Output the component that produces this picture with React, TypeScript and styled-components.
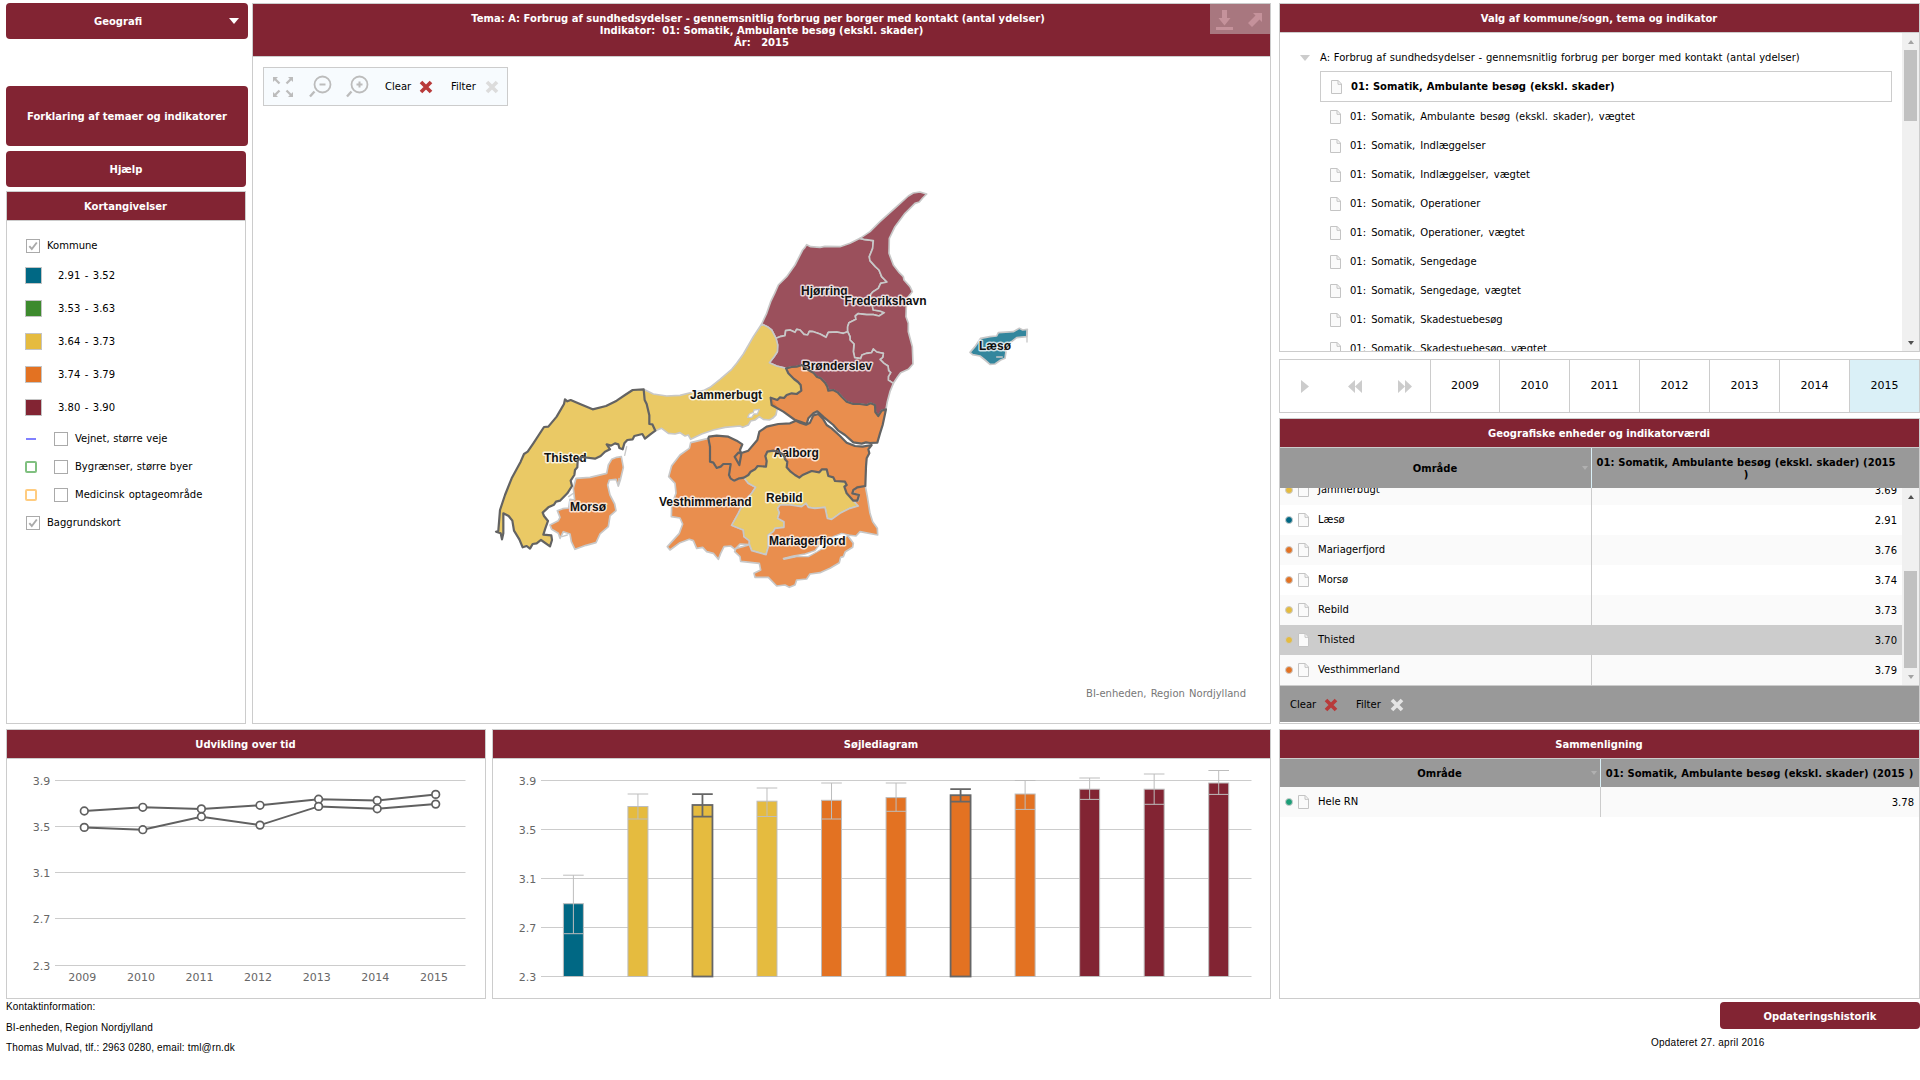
import React from 'react';
import styled, { createGlobalStyle } from 'styled-components';

const C = {
  brand: '#822433',
  line: '#cccccc',
  teal: '#006884',
  green: '#3d8a2e',
  yellow: '#e5bb3f',
  orange: '#e37222',
  dark: '#666666',
};

const Global = createGlobalStyle`
  * { box-sizing: border-box; }
  html, body { margin: 0; padding: 0; background: #fff; overflow: hidden; }
  body { font-family: "DejaVu Sans", Verdana, sans-serif; font-size: 10px; line-height: 12px; color: #000; }
  svg { display: block; flex: none; }
  svg text { font-family: "DejaVu Sans", Verdana, sans-serif; }
`;

const Page = styled.div`
  width: 1920px;
  height: 1080px;
  padding: 3px 0 0 6px;
  display: flex;
  flex-direction: column;
  overflow: hidden;
`;
const TopRow = styled.div`
  display: flex;
  height: 721px;
`;
const BottomRow = styled.div`
  display: flex;
  height: 270px;
  margin-top: 5px;
`;
const Column = styled.div<{ $w: number; $ml?: number }>`
  width: ${(p) => p.$w}px;
  margin-left: ${(p) => p.$ml ?? 0}px;
  display: flex;
  flex-direction: column;
  flex: none;
`;
const Panel = styled.section<{ $w: number; $h: number; $ml?: number; $mt?: number }>`
  width: ${(p) => p.$w}px;
  height: ${(p) => p.$h}px;
  margin-left: ${(p) => p.$ml ?? 0}px;
  margin-top: ${(p) => p.$mt ?? 0}px;
  border: 1px solid ${C.line};
  background: #fff;
  display: flex;
  flex-direction: column;
  flex: none;
  overflow: hidden;
  position: relative;
`;
const PanelTitle = styled.h2`
  margin: 0;
  padding: 2px 1px 0 0;
  height: 29px;
  flex: none;
  border-bottom: 1px solid ${C.line};
  background: ${C.brand};
  color: #fff;
  font-size: 10px;
  font-weight: bold;
  display: flex;
  align-items: center;
  justify-content: center;
`;
const Button = styled.button<{ $w: number; $h: number; $mt?: number }>`
  width: ${(p) => p.$w}px;
  height: ${(p) => p.$h}px;
  margin: ${(p) => p.$mt ?? 0}px 0 0;
  padding: 2px 0 0;
  border: 0;
  border-radius: 4px;
  background: ${C.brand};
  color: #fff;
  font: bold 10px/12px "DejaVu Sans", Verdana, sans-serif;
  display: flex;
  align-items: center;
  justify-content: center;
  flex: none;
`;
const GeoLabel = styled.span`
  flex: 1;
  margin-right: -1px;
  text-align: center;
`;
const Caret = styled.span`
  border: 5.5px solid transparent;
  border-top: 6px solid #fff;
  border-bottom: 0;
  margin: 0 9px 2px 0;
`;

const Legend = styled.div`
  padding: 11px 0 0 18px;
`;
const LegendRow = styled.div<{ $h: number; $ws?: number }>`
  height: ${(p) => p.$h}px;
  word-spacing: ${(p) => p.$ws ?? 0}px;
  display: flex;
  align-items: center;
`;
const LayerList = styled.div`
  padding-top: 1px;
`;
const Swatch = styled.i<{ $c: string }>`
  width: 17px;
  height: 17px;
  border: 1px solid #c4c4c4;
  background: ${(p) => p.$c};
  margin-right: 16px;
`;
const LayerKey = styled.span`
  width: 28px;
  display: flex;
`;
const LineKey = styled.i`
  width: 10px;
  height: 2px;
  margin-left: 1px;
  background: #8080ff;
`;
const AreaKey = styled.i<{ $c: string }>`
  width: 12px;
  height: 12px;
  border: 2px solid ${(p) => p.$c};
  border-radius: 2px;
`;
const Box = styled.span`
  width: 14px;
  height: 14px;
  border: 1px solid #aaa;
  background: #fff;
  margin: 0 7px 0 1px;
  display: flex;
  align-items: center;
  justify-content: center;
`;

const MapHeader = styled.header`
  height: 53px;
  flex: none;
  background: ${C.brand};
  border-bottom: 1px solid ${C.line};
  color: #fff;
  font-weight: bold;
  text-align: center;
  white-space: pre;
  padding-top: 9px;
`;
const MapTitle = styled.div<{ $shift?: number }>`
  padding-right: ${(p) => p.$shift ?? 0}px;
`;
const MapActions = styled.div`
  position: absolute;
  top: 0;
  right: 0;
  width: 60px;
  height: 30px;
  background: #a8777f;
`;
const MapBody = styled.div`
  flex: 1;
  position: relative;
`;
const Toolbar = styled.div`
  position: absolute;
  left: 10px;
  top: 10px;
  width: 245px;
  height: 39px;
  border: 1px solid ${C.line};
  background: #f7fbfe;
  display: flex;
  align-items: center;
  padding-left: 8px;
`;
const ToolLabel = styled.span<{ $w: number; $ml: number }>`
  width: ${(p) => p.$w}px;
  margin-left: ${(p) => p.$ml}px;
  white-space: nowrap;
`;
const Credit = styled.div`
  position: absolute;
  right: 24px;
  bottom: 23px;
  color: #777;
  word-spacing: 1px;
`;

const TreeBody = styled.div`
  flex: 1;
  display: flex;
  min-height: 0;
`;
const Tree = styled.div`
  flex: 1;
  overflow: hidden;
  padding: 11px 10px 0 20px;
`;
const TreeRoot = styled.div`
  height: 27px;
  display: flex;
  align-items: center;
  white-space: nowrap;
  word-spacing: 0.6px;
`;
const Toggle = styled.span`
  border: 5.5px solid transparent;
  border-top: 6px solid #ccc;
  border-bottom: 0;
  margin-right: 10px;
`;
const TreeItem = styled.div<{ $active?: boolean }>`
  height: ${(p) => (p.$active ? 31 : 29)}px;
  margin-left: 20px;
  padding-left: 10px;
  border: ${(p) => (p.$active ? `1px solid ${C.line}` : '0')};
  font-weight: ${(p) => (p.$active ? 'bold' : 'normal')};
  word-spacing: ${(p) => (p.$active ? 0.5 : 1.9)}px;
  display: flex;
  align-items: center;
  gap: 9px;
  white-space: nowrap;
`;
const ScrollTrack = styled.div`
  width: 17px;
  flex: none;
  background: #f0f0f0;
  display: flex;
  flex-direction: column;
  align-items: center;
`;
const ScrollArrow = styled.i<{ $up?: boolean; $c: string }>`
  border: 3.5px solid transparent;
  border-top: ${(p) => (p.$up ? '0' : `4px solid ${p.$c}`)};
  border-bottom: ${(p) => (p.$up ? `4px solid ${p.$c}` : '0')};
  margin: 7px 0 6px;
`;
const Thumb = styled.i<{ $top: number; $h: number }>`
  width: 13px;
  height: ${(p) => p.$h}px;
  margin-top: ${(p) => p.$top}px;
  margin-bottom: auto;
  background: #c1c1c1;
`;

const Timeline = styled.div`
  height: 54px;
  margin-top: 7px;
  border: 1px solid ${C.line};
  display: grid;
  grid-template-columns: 150px 69px repeat(4, 70px) 70px 70px;
`;
const Controls = styled.div`
  display: flex;
  align-items: center;
  overflow: hidden;
`;
const Year = styled.div<{ $active?: boolean }>`
  border-left: 1px solid ${C.line};
  background: ${(p) => (p.$active ? '#daf0f7' : '#fff')};
  font-size: 11px;
  display: flex;
  align-items: center;
  justify-content: center;
`;

const TableHead = styled.div<{ $h: number; $first: number }>`
  height: ${(p) => p.$h}px;
  flex: none;
  background: #999;
  display: grid;
  grid-template-columns: ${(p) => p.$first}px 1fr;
  font-weight: bold;
  text-align: center;
`;
const HeadCell = styled.div<{ $value?: boolean; $pr?: number }>`
  display: flex;
  align-items: center;
  justify-content: center;
  border-left: ${(p) => (p.$value ? '1px solid #daf0f7' : '0')};
  padding: 2px ${(p) => p.$pr ?? 1}px 0 0;
  white-space: nowrap;
  word-spacing: 0.35px;
  position: relative;
`;
const SortMark = styled.i`
  position: absolute;
  right: 3px;
  top: 50%;
  margin-top: -2px;
  border: 3.5px solid transparent;
  border-top: 4px solid #b0b0b0;
  border-bottom: 0;
`;
const TableBody = styled.div`
  display: flex;
  height: 197px;
  flex: none;
  overflow: hidden;
`;
const Rows = styled.div<{ $offset: number }>`
  flex: 1;
  margin-top: ${(p) => p.$offset}px;
`;
const Row = styled.div<{ $first: number; $bg: string }>`
  height: 30px;
  display: grid;
  grid-template-columns: ${(p) => p.$first}px 1fr;
  background: ${(p) => p.$bg};
`;
const NameCell = styled.div`
  display: flex;
  align-items: center;
  padding-left: 5px;
`;
const Dot = styled.i<{ $c: string }>`
  width: 8px;
  height: 8px;
  border-radius: 50%;
  border: 1px solid #ccc;
  background: ${(p) => p.$c};
  margin-right: 5px;
`;
const NameText = styled.span`
  margin-left: 9px;
`;
const ValueCell = styled.div`
  border-left: 1px solid ${C.line};
  display: flex;
  align-items: center;
  justify-content: flex-end;
  padding: 1px 5px 0 0;
`;
const TableFoot = styled.div`
  height: 37px;
  flex: none;
  border-top: 1px solid ${C.line};
  background: #999;
  display: flex;
  align-items: center;
  padding: 1px 0 0 10px;
`;

const Footer = styled.footer`
  display: flex;
  justify-content: space-between;
  font-family: "Liberation Sans", Arial, sans-serif;
`;
const Contact = styled.div`
  padding-top: 2px;
  line-height: 12px;
  letter-spacing: 0.17px;
`;
const ContactLine = styled.p`
  margin: 0 0 8.5px;
`;
const Updates = styled.div`
  width: 269px;
  padding-top: 3px;
  display: flex;
  flex-direction: column;
  align-items: flex-end;
`;
const Updated = styled.div`
  align-self: flex-start;
  margin-top: 8px;
  letter-spacing: 0.24px;
`;

const DocIcon = () => (
  <svg width="11" height="14" viewBox="0 0 11 14">
    <path d="M.5.5H7.2L10.5 4V13.5H.5Z" fill="#fafafa" stroke="#c4c4c4" />
    <path d="M7 .5V4.3H10.5" fill="none" stroke="#c4c4c4" />
  </svg>
);
const Cross = ({ c }: { c: string }) => (
  <svg width="14" height="14" viewBox="0 0 14 14">
    <path d="M2 2L12 12M12 2L2 12" stroke={c} strokeWidth="3.7" />
  </svg>
);
const Check = () => (
  <svg width="10" height="10" viewBox="0 0 10 10">
    <path d="M1.3 5.2L3.8 8L8.8 1.5" fill="none" stroke="#aaa" strokeWidth="1.9" />
  </svg>
);
const ExpandIcon = () => (
  <svg width="22" height="22" viewBox="0 0 22 22">
    <g fill="#bcbcbc" stroke="#bcbcbc">
      {[0, 90, 180, 270].map((a) => (
        <g key={a} transform={`rotate(${a} 11 11)`}>
          <path d="M1 1H6L1 6Z" strokeWidth="0" />
          <path d="M2.5 2.5L7.500 7.500" strokeWidth="2.3" />
        </g>
      ))}
    </g>
  </svg>
);
const ZoomIcon = ({ plus }: { plus?: boolean }) => (
  <svg width="23" height="23" viewBox="0 0 23 23">
    <g fill="none" stroke="#bcbcbc" strokeWidth="1.8">
      <circle cx="13.5" cy="9.5" r="8" />
      <path d="M5.5 16.5L1 21.5" strokeWidth="2.4" />
      <path d={plus ? 'M10.5 9.5H16.5M13.5 6.5V12.5' : 'M10.5 9.5H16.5'} strokeWidth="2" />
    </g>
  </svg>
);

const border = {
  thistedJammer: '526,752 517,733 508,732 508,706 500,672 494,660 491,628',
  jammerAalborg: '918,565 925,580 942,597 954,606 962,615 964,632 950,642 935,640 920,645 912,654 900,652 892,660 872,653',
  hjorFred: '1140,175 1152,178 1180,182 1178,205 1168,230 1170,242 1186,260 1197,270 1205,290 1221,306 1202,310 1195,325 1178,336 1171,345 1170,360 1176,374 1180,390 1200,393 1213,398 1197,408 1180,404 1160,404 1134,401 1126,408 1128,418 1107,428 1103,440 1103,455',
  hjorBron: '1103,455 1090,460 1070,456 1045,457 1038,472 1020,462 1000,455 988,454 983,465 972,463 960,450 950,448 945,457 930,450 917,452 915,467 900,470 888,475',
  bronFred: '1103,455 1110,470 1110,480 1122,492 1120,515 1124,533 1142,536 1146,525 1160,520 1175,518 1180,507 1190,516 1210,520 1208,532 1200,538 1212,550 1224,558 1226,572 1232,578 1225,590 1225,600 1240,610',
  bronAalborg: '1218,688 1205,692 1195,708 1186,696 1185,675 1172,670 1160,675 1140,672 1120,672 1100,665 1085,650 1074,638 1060,630 1045,632 1042,620 1035,608 1022,595 1010,590 1000,578 985,570 966,555 950,560 935,561 918,565',
  rebildAalborg: '792,893 805,885 812,875 825,868 833,858 858,860 860,843 856,828 862,815 880,812 895,816 912,824 915,838 922,845 920,862 932,875 945,885 958,893 968,885 995,873 1018,877 1026,868 1040,868 1045,888 1060,892 1065,903 1095,905 1100,915 1093,920 1100,940 1120,962',
  vestAalborg: '685,775 690,800 690,845 700,848 710,864 722,860 730,852 752,852 750,865 747,885 752,896 762,902 775,896 792,893',
  rebildVest: '792,893 805,910 827,922 815,940 790,970 775,1000 755,1036 790,1050 792,1070 808,1082 808,1094',
  rebildMaria: '808,1094 815,1112 858,1124 865,1100 865,1065 880,1055 885,1045 912,1042 912,1025 893,1015 898,998 893,985 900,975 930,975 965,980 978,970 985,982 1005,985 1035,982 1042,1015 1055,1018 1080,1000 1110,985 1135,978 1120,962',
};
const rev = (s: string) => s.split(' ').reverse().join(' ');

const regions = [
  { c: C.brand, p: `845,432 860,400 872,365 884,340 895,315 920,290 945,255 968,210 975,202 980,194 992,200 1020,202 1035,199 1080,200 1110,190 ${border.hjorFred} ${border.hjorBron} 875,450 862,440` },
  { c: C.brand, p: `1140,175 1170,155 1200,125 1250,80 1285,48 1300,39 1320,36 1340,42 1328,54 1318,66 1305,70 1275,100 1245,140 1228,175 1227,220 1240,255 1258,278 1270,290 1272,300 1290,320 1297,335 1285,350 1279,380 1278,410 1285,430 1285,455 1297,500 1299,552 1285,568 1262,578 1252,592 1240,610 ${rev(border.bronFred)} ${rev(border.hjorFred)}` },
  { c: C.brand, p: `${rev(border.hjorBron)} ${border.bronFred} 1230,635 1222,665 ${border.bronAalborg} 890,558 868,548 882,530 892,515 893,495 888,475` },
  { c: C.yellow, p: `491,628 520,642 560,648 600,646 640,636 670,632 690,622 720,598 755,568 770,550 790,522 820,470 845,432 862,440 875,450 888,475 893,495 892,515 882,530 868,548 890,558 ${border.jammerAalborg} 892,685 888,705 880,713 868,720 850,718 838,710 825,720 812,723 805,735 788,742 780,738 735,742 700,750 665,762 632,778 625,765 615,768 600,758 585,762 565,760 545,745 526,752 ${border.thistedJammer}` },
  { c: C.orange, p: `685,775 632,788 628,805 600,825 575,857 566,890 585,910 588,940 575,975 574,1010 600,1014 608,1032 598,1060 562,1100 570,1110 600,1088 628,1078 640,1082 650,1105 668,1102 680,1115 700,1120 715,1138 722,1120 732,1100 752,1098 765,1108 780,1092 808,1094 ${rev(border.rebildVest)} ${rev(border.vestAalborg)}` },
  { c: C.yellow, p: `${border.rebildVest} ${border.rebildMaria} ${rev(border.rebildAalborg)}` },
  { c: C.orange, p: `${border.rebildMaria} 1135,962 1137,945 1117,938 1130,920 1156,918 1162,950 1170,1000 1178,1025 1192,1045 1193,1065 1140,1055 1128,1068 1102,1065 1120,1090 1118,1102 1096,1115 1090,1130 1082,1132 1078,1148 1050,1165 1020,1178 990,1182 980,1197 950,1200 945,1215 928,1222 915,1215 890,1218 865,1192 825,1192 822,1180 842,1170 838,1150 782,1144 780,1130 764,1115 768,1105 788,1100` },
  { c: C.orange, p: '395,838 410,832 424,830 430,862 421,900 415,918 408,898 388,900 383,915 390,945 404,972 408,992 390,1008 385,1040 360,1062 348,1088 318,1096 285,1108 274,1085 270,1062 250,1055 240,1075 235,1060 215,1048 210,1035 235,1022 240,1012 232,992 248,986 266,984 270,958 284,960 280,925 288,895 330,892 380,880 385,855' },
  { c: C.teal, p: '1470,517 1485,500 1502,475 1530,470 1550,468 1555,458 1600,455 1618,445 1628,450 1642,448 1640,470 1610,473 1588,490 1578,515 1575,535 1562,540 1545,552 1530,553 1515,540 1500,528 1478,524' },
];
const selected = [
  { c: C.yellow, p: `491,628 458,630 435,645 410,662 378,678 338,688 300,672 272,660 262,664 255,658 252,672 230,710 205,740 192,741 160,790 143,815 132,822 122,845 95,895 75,945 60,990 55,1052 48,1055 62,1060 66,1078 70,1060 70,1000 86,1008 97,1022 102,1052 118,1078 128,1102 140,1098 150,1106 158,1092 170,1090 183,1080 210,1099 216,1080 214,1066 190,1064 196,1045 204,1023 192,1008 188,998 205,982 222,974 228,965 240,962 262,940 276,918 272,902 283,885 285,870 292,862 293,842 305,831 345,836 362,828 375,815 390,808 380,793 393,797 405,790 415,793 418,804 428,808 433,790 442,780 458,778 463,768 487,762 495,776 510,764 526,752 ${border.thistedJammer}` },
  { c: C.orange, p: `${border.jammerAalborg} 875,675 910,695 945,720 960,725 980,732 985,715 1000,700 1012,694 1032,712 1060,735 1075,752 1095,765 1120,787 1145,791 1158,787 1170,789 1192,788 1200,760 1208,735 1218,688 ${border.bronAalborg}` },
  { c: C.orange, p: `${border.rebildAalborg} 1132,962 1137,945 1117,940 1120,930 1132,922 1156,918 1158,860 1160,835 1168,820 1165,808 1175,795 1148,800 1125,798 1100,788 1080,768 1055,745 1040,735 1030,718 1015,702 1000,706 990,728 978,734 960,728 948,722 930,730 895,732 860,740 838,755 832,780 805,812 782,820 775,818 764,830 778,855 784,822 780,810 787,793 770,782 745,770 710,767 687,770 ${border.vestAalborg}` },
];
const labels: [string, number, number][] = [
  ['Hjørring', 801, 294.5],
  ['Frederikshavn', 844.5, 304.5],
  ['Brønderslev', 802, 369.5],
  ['Læsø', 979, 349.5],
  ['Jammerbugt', 690, 398.5],
  ['Thisted', 544, 462],
  ['Morsø', 570, 510.5],
  ['Vesthimmerland', 659, 505.5],
  ['Aalborg', 773.5, 456.5],
  ['Rebild', 766, 501.5],
  ['Mariagerfjord', 769, 544.5],
];

const geo = 'translate(480 180) scale(.33333)';
const RegionMap = () => (
  <svg width="1017" height="666" viewBox="253 57 1017 666">
    <g transform={geo} strokeLinejoin="round" strokeLinecap="round">
      {regions.map((r, i) => (
        <polygon key={i} points={r.p} fill={r.c} fillOpacity=".8" stroke="#c8c8c8" strokeWidth="5" />
      ))}
      <g fill="#fff" stroke="#c8c8c8" strokeWidth="4">
        <polygon points="803,712 808,702 820,697 822,690 838,688 832,702 822,702 815,712" />
        <polygon points="910,1135 940,1128 975,1122 1005,1112 1020,1092 1060,1070 1085,1060 1105,1065 1080,1082 1040,1098 1010,1116 985,1130 950,1130 912,1138" />
        <path d="M440,800L434,826M415,918L417,895M1641,452L1641,486M1550,531H1567M266,950L280,940M246,1070L262,1065" fill="none" />
      </g>
      {selected.map((r, i) => (
        <polygon key={i} points={r.p} fill={r.c} fillOpacity=".8" />
      ))}
    </g>
    <g fontWeight="bold" fontSize="12" fill="#111" stroke="#fff" strokeOpacity=".75" strokeWidth="3" strokeLinejoin="round" paintOrder="stroke">
      {labels.map(([t, x, y]) => (
        <text key={t} x={x} y={y} style={{ fontFamily: '"Liberation Sans", Arial, sans-serif' }}>{t}</text>
      ))}
    </g>
    <g transform={geo} strokeLinejoin="round" fill="none" stroke="#636363" strokeWidth="6.6">
      {selected.map((r, i) => <polygon key={i} points={r.p} />)}
    </g>
  </svg>
);

const years = ['2009', '2010', '2011', '2012', '2013', '2014', '2015'];
const ticks = ['3.9', '3.5', '3.1', '2.7', '2.3'];
const seriesX = [84.3, 142.8, 201.4, 260, 318.6, 377.2, 435.7];
const series = [
  [811, 807.3, 808.9, 805.3, 799.2, 800.4, 794.4],
  [827.4, 829.7, 816.7, 825.1, 806.4, 808.8, 804.1],
];
const LineChart = () => (
  <svg width="478" height="239" viewBox="7 759 478 239">
    {[780.5, 826.5, 872.5, 918.5, 965.5].map((y, i) => (
      <g key={y}>
        <path d={`M55,${y}H465.5`} stroke="#ccc" />
        <text x="50.2" y={y + 4.3} textAnchor="end" fontSize="11" fill="#666">{ticks[i]}</text>
      </g>
    ))}
    {years.map((t, i) => (
      <text key={t} x={82.3 + i * 58.6} y="981" textAnchor="middle" fontSize="11" fill="#666">{t}</text>
    ))}
    {series.map((s, k) => (
      <g key={k} stroke="#606060" fill="none">
        <polyline points={s.map((y, i) => `${seriesX[i]},${y}`).join(' ')} strokeWidth="2" />
        {s.map((y, i) => <circle key={i} cx={seriesX[i]} cy={y} r="3.8" fill="#fff" strokeWidth="1.7" />)}
      </g>
    ))}
  </svg>
);

const bars: [string, number, number, number, boolean?][] = [
  [C.teal, 903.7, 875.2, 933.7],
  [C.yellow, 806.5, 794, 819],
  [C.yellow, 805, 794.2, 816.7, true],
  [C.yellow, 801.2, 788, 816.5],
  [C.orange, 800.3, 783, 819],
  [C.orange, 797.6, 783, 811.3],
  [C.orange, 795.2, 789.2, 801.6, true],
  [C.orange, 794, 780.5, 809.4],
  [C.brand, 789.2, 778, 799.4],
  [C.brand, 789.2, 774, 804.3],
  [C.brand, 783, 770.5, 794.4],
];
const BarChart = () => (
  <svg width="777" height="239" viewBox="493 759 777 239">
    {[780.5, 829.5, 878.5, 927.5, 976.5].map((y, i) => (
      <g key={y}>
        <path d={`M541,${y}H1251.5`} stroke="#ccc" />
        <text x="536.2" y={y + 4.3} textAnchor="end" fontSize="11" fill="#666">{ticks[i]}</text>
      </g>
    ))}
    {bars.map(([c, top, hi, lo, sel], i) => {
      const x = 573.4 + i * 64.53;
      return (
        <g key={i} stroke={sel ? C.dark : '#bdbdbd'} strokeWidth={sel ? 1.8 : 1} fill="none">
          <rect x={x - 10} y={top} width="20" height={976.5 - top} fill={c} />
          <path d={`M${x - 10.3},${hi}H${x + 10.3}M${x - 10},${lo}H${x + 10}M${x},${hi}V${lo}`} />
        </g>
      );
    })}
  </svg>
);

const items = [
  'Ambulante besøg (ekskl. skader), vægtet', 'Indlæggelser', 'Indlæggelser, vægtet', 'Operationer', 'Operationer, vægtet',
  'Sengedage', 'Sengedage, vægtet', 'Skadestuebesøg', 'Skadestuebesøg, vægtet',
];
const classes = [
  ['2.91 - 3.52', C.teal], ['3.53 - 3.63', C.green], ['3.64 - 3.73', C.yellow], ['3.74 - 3.79', C.orange], ['3.80 - 3.90', C.brand],
];
const areas = [
  ['Jammerbugt', '3.69', C.yellow, '#fafafa'],
  ['Læsø', '2.91', C.teal, '#fff'],
  ['Mariagerfjord', '3.76', C.orange, '#fafafa'],
  ['Morsø', '3.74', C.orange, '#fff'],
  ['Rebild', '3.73', C.yellow, '#fafafa'],
  ['Thisted', '3.70', C.yellow, '#ccc'],
  ['Vesthimmerland', '3.79', C.orange, '#fafafa'],
];

export default function App() {
  return (
    <Page>
      <Global />
      <TopRow>
        <Column $w={242}>
          <Button $w={242} $h={36}><GeoLabel>Geografi</GeoLabel><Caret /></Button>
          <Button $w={242} $h={60} $mt={47}>Forklaring af temaer og indikatorer</Button>
          <Button $w={240} $h={36} $mt={5}>Hjælp</Button>
          <Panel $w={240} $h={533} $mt={4}>
            <PanelTitle>Kortangivelser</PanelTitle>
            <Legend>
              <LegendRow $h={27}><Box><Check /></Box>Kommune</LegendRow>
              {classes.map(([t, c]) => <LegendRow key={t} $h={33} $ws={1.3}><Swatch $c={c} />{t}</LegendRow>)}
              <LayerList>
                <LegendRow $h={28} $ws={0.6}><LayerKey><LineKey /></LayerKey><Box />Vejnet, større veje</LegendRow>
                <LegendRow $h={28} $ws={0.6}><LayerKey><AreaKey $c="#80c080" /></LayerKey><Box />Bygrænser, større byer</LegendRow>
                <LegendRow $h={28} $ws={1}><LayerKey><AreaKey $c="#ffcc80" /></LayerKey><Box />Medicinsk optageområde</LegendRow>
                <LegendRow $h={28}><Box><Check /></Box>Baggrundskort</LegendRow>
              </LayerList>
            </Legend>
          </Panel>
        </Column>

        <Panel $w={1019} $h={721} $ml={4}>
          <MapHeader>
            <MapTitle $shift={7}>Tema: A: Forbrug af sundhedsydelser - gennemsnitlig forbrug per borger med kontakt (antal ydelser)</MapTitle>
            <MapTitle>{'Indikator:  01: Somatik, Ambulante besøg (ekskl. skader)'}</MapTitle>
            <MapTitle>{'År:   2015'}</MapTitle>
          </MapHeader>
          <MapActions>
            <svg width="60" height="30" viewBox="0 0 60 30" fill="#c5929b">
              <path d="M12 6H17V14H20.500L14.500 21.500L8.500 14H12ZM6 23H23V26H6Z" />
              <path d="M43 9H52V18L49.500 15.500L42 23L38 19L45.500 11.500Z" />
            </svg>
          </MapActions>
          <MapBody>
            <RegionMap />
            <Toolbar>
              <ExpandIcon />
              <ToolLabel $w={0} $ml={15} />
              <ZoomIcon />
              <ToolLabel $w={0} $ml={14} />
              <ZoomIcon plus />
              <ToolLabel $w={26} $ml={16}>Clear</ToolLabel>
              <ToolLabel $w={0} $ml={8} />
              <Cross c="#b83a3a" />
              <ToolLabel $w={26} $ml={18}>Filter</ToolLabel>
              <ToolLabel $w={0} $ml={8} />
              <Cross c="#dcdcdc" />
            </Toolbar>
            <Credit>BI-enheden, Region Nordjylland</Credit>
          </MapBody>
        </Panel>

        <Column $w={641} $ml={8}>
          <Panel $w={641} $h={349}>
            <PanelTitle>Valg af kommune/sogn, tema og indikator</PanelTitle>
            <TreeBody>
              <Tree>
                <TreeRoot><Toggle />A: Forbrug af sundhedsydelser - gennemsnitlig forbrug per borger med kontakt (antal ydelser)</TreeRoot>
                <TreeItem $active><DocIcon />01: Somatik, Ambulante besøg (ekskl. skader)</TreeItem>
                {items.map((t) => <TreeItem key={t}><DocIcon />01: Somatik, {t}</TreeItem>)}
              </Tree>
              <ScrollTrack>
                <ScrollArrow $up $c="#a3a3a3" />
                <Thumb $top={0} $h={71} />
                <ScrollArrow $c="#505050" />
              </ScrollTrack>
            </TreeBody>
          </Panel>
          <Timeline>
            <Controls>
              <svg width="151" height="52" viewBox="0 0 151 52" fill="#ccc">
                <path d="M21 20L29 26.500L21 33ZM75 20V33L68 26.500ZM82 20V33L75 26.500ZM118 20L125 26.500L118 33ZM125 20L132 26.500L125 33Z" />
              </svg>
            </Controls>
            {years.map((y) => <Year key={y} $active={y === '2015'}>{y}</Year>)}
          </Timeline>
          <Panel $w={641} $h={306} $mt={5}>
            <PanelTitle>Geografiske enheder og indikatorværdi</PanelTitle>
            <TableHead $h={40} $first={311}>
              <HeadCell>Område<SortMark /></HeadCell>
              <HeadCell $value $pr={19}>01: Somatik, Ambulante besøg (ekskl. skader) (2015<br />)</HeadCell>
            </TableHead>
            <TableBody>
              <Rows $offset={-13}>
                {areas.map(([n, v, c, bg]) => (
                  <Row key={n} $first={311} $bg={bg}>
                    <NameCell><Dot $c={c} /><DocIcon /><NameText>{n}</NameText></NameCell>
                    <ValueCell>{v}</ValueCell>
                  </Row>
                ))}
              </Rows>
              <ScrollTrack>
                <ScrollArrow $up $c="#505050" />
                <Thumb $top={66} $h={97} />
                <ScrollArrow $c="#a3a3a3" />
              </ScrollTrack>
            </TableBody>
            <TableFoot>
              <ToolLabel $w={27} $ml={0}>Clear</ToolLabel>
              <ToolLabel $w={0} $ml={7} />
              <Cross c="#b83a3a" />
              <ToolLabel $w={27} $ml={18}>Filter</ToolLabel>
              <ToolLabel $w={0} $ml={7} />
              <Cross c="#e4e4e4" />
            </TableFoot>
          </Panel>
        </Column>
      </TopRow>

      <BottomRow>
        <Panel $w={480} $h={270}>
          <PanelTitle>Udvikling over tid</PanelTitle>
          <LineChart />
        </Panel>
        <Panel $w={779} $h={270} $ml={6}>
          <PanelTitle>Søjlediagram</PanelTitle>
          <BarChart />
        </Panel>
        <Panel $w={641} $h={270} $ml={8}>
          <PanelTitle>Sammenligning</PanelTitle>
          <TableHead $h={28} $first={320}>
            <HeadCell>Område<SortMark /></HeadCell>
            <HeadCell $value>01: Somatik, Ambulante besøg (ekskl. skader) (2015 )</HeadCell>
          </TableHead>
          <Row $first={320} $bg="#fafafa">
            <NameCell><Dot $c="#1b9e77" /><DocIcon /><NameText>Hele RN</NameText></NameCell>
            <ValueCell>3.78</ValueCell>
          </Row>
        </Panel>
      </BottomRow>

      <Footer>
        <Contact>
          <ContactLine>Kontaktinformation:</ContactLine>
          <ContactLine>BI-enheden, Region Nordjylland</ContactLine>
          <ContactLine>Thomas Mulvad, tlf.: 2963 0280, email: tml@rn.dk</ContactLine>
        </Contact>
        <Updates>
          <Button $w={200} $h={27}>Opdateringshistorik</Button>
          <Updated>Opdateret 27. april 2016</Updated>
        </Updates>
      </Footer>
    </Page>
  );
}
